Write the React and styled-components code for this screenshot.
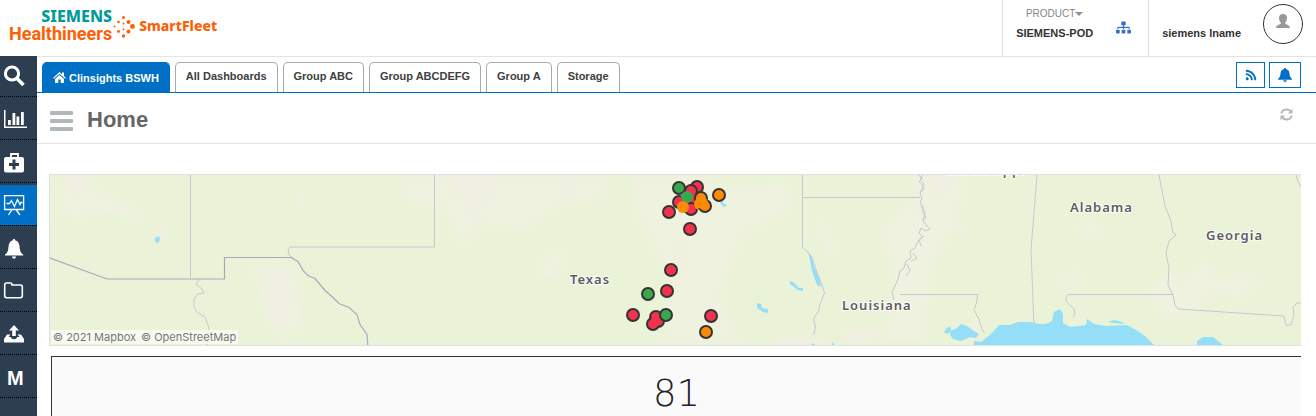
import React from "react";
import styled, { createGlobalStyle } from "styled-components";
import { FaSitemap, FaRss } from "react-icons/fa";

const GlobalStyle = createGlobalStyle`
  * { box-sizing: border-box; }
  html, body { margin: 0; background: #fff; }
  body { font: 11px/16px "Liberation Sans", Arial, sans-serif; color: #333; }
  button { font: inherit; color: inherit; padding: 0; margin: 0; cursor: pointer; }
  svg { display: block; }
`;

const blue = "#0070c6";
const navy = "#2c3e50";

const Page = styled.div`
  display: flex;
  flex-direction: column;
  height: 100vh;
  overflow: hidden;
`;

const Header = styled.header`
  display: flex;
  justify-content: space-between;
  flex: none;
  height: 56px;
`;

const Logo = styled.a`
  display: flex;
  padding: 8px 0 0 9px;
  text-decoration: none;
  font-family: "Noto Sans", sans-serif;
  font-weight: 700;
  color: #fc6003;
`;

const LogoStack = styled.span`
  display: flex;
  flex-direction: column;
  align-items: flex-end;
`;

const Siemens = styled.span`
  font-size: 16px;
  font-weight: 800;
  line-height: 17px;
  color: #009c95;
`;

const Healthineers = styled.span`
  font-family: Roboto, sans-serif;
  font-size: 18px;
  font-weight: 700;
  line-height: 18px;
`;

const LogoDots = styled.svg`
  margin: 6px 4px 0 1px;
`;

const SmartFleet = styled.span`
  padding-top: 9px;
  font-size: 14px;
  font-weight: 800;
  line-height: 18px;
`;

const HeaderRight = styled.div`
  display: flex;
`;

const Product = styled.div`
  display: flex;
  gap: 23px;
  width: 147px;
  padding: 6px 0 0 13px;
  border: solid #ddd;
  border-width: 0 1px;
`;

const ProductNames = styled.div`
  display: flex;
  flex-direction: column;
  gap: 3px;
`;

const ProductButton = styled.button`
  display: flex;
  align-items: center;
  justify-content: center;
  border: 0;
  background: none;
  font-size: 10px;
  line-height: 16px;
  color: #858585;
`;

const Caret = styled.span`
  border: 4px solid transparent;
  border-top-color: #8f8f8f;
  border-bottom: 0;
`;

const SiteButton = styled.button`
  align-self: flex-start;
  margin-top: 14px;
  border: 0;
  background: none;
  color: #3470cc;
`;

const User = styled.div`
  display: flex;
  gap: 22px;
  padding: 4px 13px 0 13px;
`;

const UserName = styled.span`
  padding-top: 21px;
  font-weight: 700;
`;

const Avatar = styled.button`
  display: flex;
  justify-content: center;
  width: 40px;
  height: 40px;
  padding-top: 9px;
  border: 1px solid #333;
  border-radius: 50%;
  background: #fff;
`;

const Body = styled.div`
  display: flex;
  flex: 1;
  min-height: 0;
`;

const Sidebar = styled.nav`
  flex: none;
  width: 37px;
  background: ${navy};
`;

const SideList = styled.ul`
  margin: 0;
  padding: 0;
  list-style: none;
`;

const SideItem = styled.li`
  padding-top: 2px;
  border-bottom: 1px dotted #000;
  &:first-child { padding-top: 0; }
`;

const SideButton = styled.button`
  display: flex;
  align-items: center;
  width: 100%;
  height: 40px;
  padding-left: 3px;
  border: 0;
  background: ${(p) => (p.$active ? blue : "transparent")};
  color: #fff;
`;

const SideLetter = styled.span`
  padding: 2px 0 0 4px;
  font-size: 20px;
  line-height: 24px;
  font-weight: 700;
`;

const Main = styled.main`
  display: flex;
  flex-direction: column;
  flex: 1;
  min-width: 0;
  border-top: 1px solid #e4e4e4;
`;

const TabBar = styled.div`
  display: flex;
  justify-content: space-between;
  flex: none;
  padding: 5px 15px 0 5px;
  border-bottom: 1px solid ${blue};
`;

const Tabs = styled.div`
  display: flex;
  gap: 5px;
`;

const Tab = styled.button`
  display: flex;
  align-items: center;
  gap: 3px;
  height: 30px;
  padding: ${(p) => (p.$active ? "0 10px" : "0 10px 4px")};
  border: 1px solid ${(p) => (p.$active ? blue : "#aaa")};
  border-bottom: 0;
  border-radius: 5px 5px 0 0;
  background: ${(p) => (p.$active ? blue : "#fff")};
  color: ${(p) => (p.$active ? "#fff" : "#404040")};
  font-weight: 700;
`;

const Actions = styled.div`
  display: flex;
  gap: 4px;
`;

const ActionButton = styled.button`
  display: flex;
  align-items: center;
  justify-content: center;
  width: ${(p) => (p.$wide ? "32px" : "29px")};
  height: 26px;
  border: 1px solid ${blue};
  background: #fff;
  color: ${blue};
`;

const TitleBar = styled.div`
  display: flex;
  justify-content: space-between;
  flex: none;
  height: 51px;
  padding: 0 23px 0 13px;
  border-bottom: 1px solid #e4e4e4;
`;

const TitleGroup = styled.div`
  display: flex;
  align-items: center;
  gap: 14px;
`;

const MenuButton = styled.button`
  display: flex;
  flex-direction: column;
  gap: 4px;
  width: 23px;
  margin-top: 6px;
  border: 0;
  background: none;
`;

const Bar = styled.span`
  width: 100%;
  height: 4px;
  border-radius: 1px;
  background: #afb9b9;
`;

const Title = styled.h1`
  margin: 4px 0 0;
  font-size: 22px;
  line-height: 28px;
  color: #666;
`;

const RefreshButton = styled.button`
  align-self: flex-start;
  margin-top: 15px;
  border: 0;
  background: none;
`;

const Content = styled.div`
  display: flex;
  flex-direction: column;
  flex: 1;
  gap: 10px;
  padding: 30px 15px 0 12px;
`;

const MapPanel = styled.section`
  position: relative;
  flex: none;
  border: solid #e0e0e0;
  border-width: 1px 0 1px 1px;
`;

const MapDrawing = styled.svg`
  width: 100%;
  height: 170px;
`;

const StateLabel = styled.text`
  font: 600 13px "Noto Sans", sans-serif;
  letter-spacing: 1px;
  fill: #5d5c68;
  stroke: #fbfdf4;
  stroke-width: 2px;
  paint-order: stroke;
`;

const Attribution = styled.div`
  position: absolute;
  left: 1px;
  bottom: 1px;
  display: flex;
  gap: 5px;
  padding: 0 2px;
  background: rgba(255, 255, 255, 0.6);
  font: 11px/14px Inter, sans-serif;
`;

const AttributionLink = styled.a`
  color: #777;
  text-decoration: none;
`;

const CountCard = styled.section`
  flex: 1;
  margin-left: 2px;
  padding-top: 13px;
  border: solid #333;
  border-width: 1px 0 0 1px;
  background: #fafafa;
  text-align: center;
  font: 200 37px/48px "DejaVu Sans", sans-serif;
  color: #222;
`;

const Icon = ({ w = 24, h = 24, box, children }) => (
  <svg width={w} height={h} viewBox={box || `0 0 ${w} ${h}`} fill="currentColor" aria-hidden="true">
    {children}
  </svg>
);

const bellPath = "M7 0C7.6 0 8 .4 8 1c2.300.600 3.400 2.200 3.500 4.500C11.600 8.500 12.500 9.600 14 11v.8H0V11c1.500-1.400 2.400-2.500 2.500-5.500C2.600 3.200 3.700 1.600 6 1c0-.600.400-1 1-1zM5.200 12.300h3.600C8.600 13.500 8 14 7 14s-1.600-.5-1.800-1.700z";

const sideItems = [
  {
    label: "Search",
    icon: (
      <Icon>
        <g fill="none" stroke="#fff">
          <circle cx="9" cy="9.500" r="6.600" strokeWidth="3" />
          <path d="M13.500 14l7 7" strokeWidth="3.600" />
        </g>
      </Icon>
    ),
  },
  {
    label: "Reports",
    icon: (
      <Icon>
        <path d="M1 3h1.500v16.500H24V21H1zM5 13h2.800v5H5zM9.500 6h2.800v12H9.500zM13.500 9.500h2.800V18h-2.800zM18 5h2.800v13H18z" />
      </Icon>
    ),
  },
  {
    label: "Services",
    icon: (
      <Icon>
        <path d="M8 8V4h7v4" fill="none" stroke="#fff" strokeWidth="1.800" />
        <rect x="1" y="7" width="20" height="15.500" rx="2" />
        <path d="M6 14.500h10M11 9.500v10" stroke={navy} strokeWidth="3" />
      </Icon>
    ),
  },
  {
    label: "Dashboards",
    active: true,
    icon: (
      <Icon>
        <g fill="none" stroke="#fff" strokeWidth="1.300">
          <path d="M1.600 2.700h19v13.800h-19zM3.500 10.500h3l2-3 3 6 3-7 2.500 5 1-2h1.500M9 16.500l-3.500 5.500M13 16.500l4 5.500" />
        </g>
      </Icon>
    ),
  },
  {
    label: "Alerts",
    icon: (
      <Icon box="-2 -3 24 24">
        <path d="M9 0c.8 0 1 .5 1.200 1.200C13.500 2 14.500 5 14.700 9c.2 3.500 1.300 5 3.500 6.600v1H0v-1C2 14 3.200 12.500 3.400 9 3.600 5 4.700 2 7.800 1.200 8 .5 8.200 0 9 0zM7 17.600h4C10.800 19 10 19.800 9 19.800S7.200 19 7 17.600z" />
      </Icon>
    ),
  },
  {
    label: "Files",
    icon: (
      <Icon>
        <path d="M3.500 4h4q1.500 0 1.500 2h8.500q1.800 0 1.800 1.800v9q0 1.900-1.800 1.900h-14q-1.800 0-1.800-1.900v-11Q1.700 4 3.500 4z" fill="none" stroke="#fff" strokeWidth="1.600" />
      </Icon>
    ),
  },
  {
    label: "Upload",
    icon: (
      <Icon>
        <path d="M11 3l5 5.500h-3.200V14H9.200V8.500H6zM4 12.500h3.500L5.500 15h2.300c.5 1.500 1.500 2.200 3.200 2.200s2.700-.7 3.200-2.200h2.300l-2-2.500H18l3 4.500v3.500H1V17z" />
      </Icon>
    ),
  },
  { label: "M", icon: <SideLetter>M</SideLetter> },
];

const tabs = ["Clinsights BSWH", "All Dashboards", "Group ABC", "Group ABCDEFG", "Group A", "Storage"];

const red = "#f0324f";
const green = "#37a84b";
const orange = "#fd8a07";
const markers = [
  [697, 187, red], [691, 191, red], [679, 188, green], [679, 202, red], [691, 198, red, true],
  [691, 209, red], [669, 212, red], [687, 197, green, true], [683, 207, orange, true],
  [701, 198, orange], [700, 204, orange, true], [705, 206, orange], [702, 203, orange, true],
  [719, 195, orange], [690, 229, red], [671, 270, red], [648, 294, green], [667, 291, red],
  [633, 315, red], [658, 321, red], [656, 317, red], [653, 324, red], [657, 320, red, true],
  [666, 315, green], [711, 316, red], [706, 332, orange],
];

const labels = [
  [570, 284, "Texas"], [842, 310, "Louisiana"], [1070, 212, "Alabama"],
  [1206, 240, "Georgia"], [946, 175, "Mississippi"],
];

const RegionMap = () => (
  <MapDrawing viewBox="50 175 1251 170" preserveAspectRatio="xMidYMid slice" role="img" aria-label="Map of site locations">
    <defs>
      <filter id="soften" x="-20%" y="-20%" width="140%" height="140%">
        <feGaussianBlur stdDeviation="2" />
      </filter>
    </defs>
    <rect x="50" y="175" width="1251" height="170" fill="#eaf3d7" />
    <g fill="#eef2de" filter="url(#soften)">
      <path d="M400 175h210l-10 25-45 10-30 20-40-5-25 25-15-40-45-10zM630 175h70l25 15 60-10 10 30-50 25-25 60 20 50h-80l10-60-35-70zM880 230l30-30 5-25h50l-5 45-25 40-10 80h-45l15-50zM540 260l20-15 5 20-12 15-14-1z" />
      <path d="M62 180l22-5 20 18 40 20-10 8-40-10-15 10-18-10zM1150 285l20-15 10 10 25-22 15 20 25-6 15 15-20 14-25-8-15 20-40 5zM1075 225l12-8 20 15-20 8z" />
      <path d="M252 265l25-5 22 15 5 50-20 15-20-25zM1055 275l25-5 5 15-20 5zM815 215l15 20 15 25-20-10z" />
    </g>
    <g fill="#f3eee6" opacity=".7" filter="url(#soften)">
      <path d="M64 178l20-2 8 12-14 6zM267 268l16 5 5 20-3 40-12-5-2-20zM297 195l8 3-1 10-8-3zM460 178l36-2-5 20-15 8 8 20-10-4-6-22-20-2zM565 178l8-1-5 25-10 3zM157 228l10 2-1 10-8 4zM675 185l15-4 5 10-15 10zM678 245l6-6-6 40-7 10zM780 335l45 5v10h-50zM935 178l22-2-10 15-12 8zM955 224l12-1v8l-10 3zM840 332l30-5 10 8-25 12zM920 175l6 18-5 30-4-20zM948 328l25-5 15 5-30 10z" />
    </g>
    <g fill="#94dff7">
      <path d="M155 238l4-2 1 4-2 3-3-1zM721 201l6 5-3 1-4-4zM757 303l4 1 1 4 6 1 0 4-5-1-6-4zM790 281l3 1 6 6 4 0v3l-5-1-8-6zM808 252l4 4 2 11 6 13 1 7-4-2-5-14-2-11zM811 345l2-2 2 2zM832 345v-3l2 2v1zM944 332l3-4 3-2 1 5-4 3zM950 331l7-3 4-4 6 2 7 5 5 3-3 4-6-1-9 4-8-2-3-4zM974 345v-4l7 1 11-9 7-8h11l8-3h13l8 2h7l6-3 2-9 6-3 3 5v9l7 4 16-2 1-6 7 5 12 2 21-1 9 5 9 6 10 10zM1108 322l6-2 8 2 2 2-9-1zM1197 345v-4l6-4h10l5 4 5 4z" />
    </g>
    <g fill="none" stroke="#c5c8d0" strokeWidth="1">
      <path d="M190.500 175v103M434.500 175v72H290l-2 3 1 5 4 3M802.500 175v72l4 4 6 8 4 12 5 12 3 10-4 10-2 8-5 8 2 8-2 8M802.500 197.500H920" />
      <path d="M1037 175l-6 75 3 75M900 294.500h78l-2 10 -2 5 5 10 3 10 3 4M1073 318l2-5-1-4-8-8 0-4 2-2.500h104" />
      <path d="M1159 175l6 31 6 15 2 12 3 2-7 6-3 12 3 15-1 17 5 10 2 10 3 4 106 7 2 9h5l3-10-1-8 4-4h6M1296 175l2 7 4 6" />
      <path d="M200 279l-4 5 6 5 2 4-6 1-4 5v8l3 5 8 5 3 8 1 5-2 5v11" />
      <path d="M919 175l3 4-3 3 3 3 2 4-4 4 2 5-2 5 3 4 0 6 3 4-3 4 4 5 3 3-5 2-4-3-2 5 4 4-5 4-3 7-5 3 1 7-5 3-2 7-4 3-2 8-3 7-3 6 2 8" />
      <path d="M923 175l-3 5 4 4-4 9M921 205l4 8-2 7M924 236l-5 4 2 6M913 253l4 5-6 3M907 264l3 7-4 5" />
    </g>
    <path d="M50 258l57 21h117.500v-21.500H291l7 4 5 9 5 5 7 3 10 12 8 7 6 6 10 4 8 7 3 10 7 10 1 12" fill="none" stroke="#aaa7bd" strokeWidth="1.200" />
    {labels.map(([x, y, name]) => (
      <StateLabel key={name} x={x} y={y}>{name}</StateLabel>
    ))}
    {markers.map(([x, y, color, plain], i) => (
      <circle key={i} cx={x} cy={y} r="6" fill={color} stroke={plain ? "none" : "#333"} strokeWidth="2" />
    ))}
  </MapDrawing>
);

export default function App() {
  return (
    <Page>
      <GlobalStyle />
      <Header>
        <Logo href="#home">
          <LogoStack>
            <Siemens>SIEMENS</Siemens>
            <Healthineers>Healthineers</Healthineers>
          </LogoStack>
          <LogoDots width="22" height="26" viewBox="0 0 22 26" fill="currentColor" aria-hidden="true">
            <circle cx="10.500" cy="3.500" r="1.500" />
            <circle cx="5.500" cy="8" r="1.300" />
            <circle cx="15.500" cy="8" r="2" />
            <circle cx="1.500" cy="12.500" r="1" />
            <circle cx="10.500" cy="9.500" r="1" />
            <circle cx="10.500" cy="15.500" r="1" />
            <circle cx="19.500" cy="12.500" r="2.400" />
            <circle cx="5.500" cy="17.500" r="1.400" />
            <circle cx="15.500" cy="17.500" r="2" />
            <circle cx="10.500" cy="22" r="1.700" />
          </LogoDots>
          <SmartFleet>SmartFleet</SmartFleet>
        </Logo>
        <HeaderRight>
          <Product>
            <ProductNames>
              <ProductButton>PRODUCT<Caret /></ProductButton>
              <strong>SIEMENS-POD</strong>
            </ProductNames>
            <SiteButton aria-label="Site hierarchy"><FaSitemap size={15} /></SiteButton>
          </Product>
          <User>
            <UserName>siemens lname</UserName>
            <Avatar aria-label="Account">
              <Icon w={14} h={14}>
                <path fill="#999" d="M7 0c2.600 0 4 1.500 4 4 0 2-.7 3.500-1.800 4.500v1.300c1 .9 4.800 1.200 4.800 4.200H0c0-3 3.800-3.300 4.800-4.200V8.500C3.700 7.500 3 6 3 4c0-2.500 1.400-4 4-4z" />
              </Icon>
            </Avatar>
          </User>
        </HeaderRight>
      </Header>
      <Body>
        <Sidebar>
          <SideList>
            {sideItems.map((item) => (
              <SideItem key={item.label}>
                <SideButton $active={item.active} aria-label={item.label}>{item.icon}</SideButton>
              </SideItem>
            ))}
          </SideList>
        </Sidebar>
        <Main>
          <TabBar>
            <Tabs>
              {tabs.map((name, i) => (
                <Tab key={name} $active={i === 0}>
                  {i === 0 && (
                    <Icon w={13} h={14}>
                      <path d="M6.500 1L9 3.300V1.500h2v3.600l2 1.800-.8.900-5.700-5-5.700 5L0 6.900zM6.500 4l4.500 4v4H7.700V8.500H5.300V12H2V8z" />
                    </Icon>
                  )}
                  {name}
                </Tab>
              ))}
            </Tabs>
            <Actions>
              <ActionButton aria-label="News feed"><FaRss size={12} /></ActionButton>
              <ActionButton $wide aria-label="Notifications"><Icon w={14} h={14}><path d={bellPath} /></Icon></ActionButton>
            </Actions>
          </TabBar>
          <TitleBar>
            <TitleGroup>
              <MenuButton aria-label="Menu"><Bar /><Bar /><Bar /></MenuButton>
              <Title>Home</Title>
            </TitleGroup>
            <RefreshButton aria-label="Refresh">
              <Icon w={13} h={13}>
                <g fill="none" stroke="#b3baba" strokeWidth="2">
                  <path d="M1.300 5.500C2 3 4 1.500 6.500 1.500c1.700 0 3 .6 4.100 1.800M11.700 7.500c-.7 2.500-2.700 4-5.200 4-1.700 0-3-.6-4.100-1.800" />
                </g>
                <path fill="#b3baba" d="M12.500.8v4.700H7.800zM.5 12.200V7.500h4.700z" />
              </Icon>
            </RefreshButton>
          </TitleBar>
          <Content>
            <MapPanel>
              <RegionMap />
              <Attribution>
                <AttributionLink href="#mapbox">© 2021 Mapbox</AttributionLink>
                <AttributionLink href="#osm">© OpenStreetMap</AttributionLink>
              </Attribution>
            </MapPanel>
            <CountCard>81</CountCard>
          </Content>
        </Main>
      </Body>
    </Page>
  );
}
